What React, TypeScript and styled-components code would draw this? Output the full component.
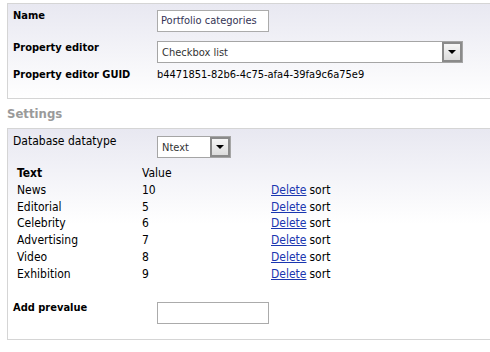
import React from 'react';
import styled, { createGlobalStyle } from 'styled-components';

const GlobalStyle = createGlobalStyle`
  html, body {
    margin: 0;
    padding: 0;
    background: #fff;
    overflow: hidden;
  }
  body {
    font-family: "DejaVu Sans Condensed", "DejaVu Sans", sans-serif;
    font-size: 11px;
    color: #000;
  }
`;

const Page = styled.div`
  width: 490px;
  height: 352px;
  padding: 3px 0 0 7px;
  box-sizing: border-box;
`;

const Panel = styled.div<{ $height: number }>`
  height: ${(p) => p.$height}px;
  box-sizing: border-box;
  border: 1px solid #d5d5d5;
  border-right: none;
  background: linear-gradient(#e8e8f1 0px, #ffffff 95px);
  padding: 4px 0 0 5px;
`;

const Heading = styled.h3`
  margin: 0;
  height: 26px;
  line-height: 24px;
  font-size: 13px;
  font-weight: bold;
  color: #9a9a9a;
`;

const FieldRow = styled.div<{ $h: number }>`
  display: grid;
  grid-template-columns: 144px 1fr;
  height: ${(p) => p.$h}px;
  align-items: start;
`;

const Label = styled.label<{ $bold?: boolean }>`
  font-weight: ${(p) => (p.$bold ? 'bold' : 'normal')};
  font-size: ${(p) => (p.$bold ? '11px' : '12px')};
  padding-top: 1px;
  line-height: 14px;
`;

const TextBox = styled.div<{ $w: number }>`
  width: ${(p) => p.$w}px;
  height: 22px;
  box-sizing: border-box;
  border: 1px solid #ababab;
  background: #fff;
  color: #333355;
  padding: 0 3px;
  line-height: 20px;
  margin-top: 2px;
`;

const Select = styled.div<{ $w: number; $top: number }>`
  width: ${(p) => p.$w}px;
  height: 22px;
  margin-top: ${(p) => p.$top}px;
  box-sizing: border-box;
  border: 1px solid #a5a5a5;
  background: #fff;
  display: flex;
  align-items: center;
  justify-content: space-between;
  padding-left: 4px;
  color: #333;
`;

const Arrow = styled.span`
  width: 20px;
  height: 20px;
  box-sizing: border-box;
  border: 2px solid #8a8a8a;
  background: linear-gradient(#f6f6f6, #dcdcdc);
  display: flex;
  align-items: center;
  justify-content: center;
  &::after {
    content: '';
    border-left: 4px solid transparent;
    border-right: 4px solid transparent;
    border-top: 4px solid #000;
  }
`;

const Guid = styled.span`
  line-height: 14px;
  padding-top: 1px;
`;

const Table = styled.div`
  display: grid;
  grid-template-columns: 125px 129px 1fr;
  padding-left: 4px;
  margin-top: 2px;
  font-size: 12px;
`;

const Cell = styled.div<{ $bold?: boolean }>`
  height: 16.8px;
  line-height: 16px;
  font-weight: ${(p) => (p.$bold ? 'bold' : 'normal')};
`;

const DeleteLink = styled.a`
  color: #1a36b0;
  text-decoration: underline;
  margin-right: 3px;
`;

const Spacer = styled.div<{ $h: number }>`
  height: ${(p) => p.$h}px;
`;

const rows: [string, number][] = [
  ['News', 10],
  ['Editorial', 5],
  ['Celebrity', 6],
  ['Advertising', 7],
  ['Video', 8],
  ['Exhibition', 9],
];

export default function App() {
  return (
    <Page>
      <GlobalStyle />
      <Panel $height={96}>
        <FieldRow $h={32}>
          <Label $bold>Name</Label>
          <TextBox $w={112}>Portfolio categories</TextBox>
        </FieldRow>
        <FieldRow $h={27}>
          <Label $bold>Property editor</Label>
          <Select $w={306} $top={1}>
            Checkbox list
            <Arrow />
          </Select>
        </FieldRow>
        <FieldRow $h={20}>
          <Label $bold>Property editor GUID</Label>
          <Guid>b4471851-82b6-4c75-afa4-39fa9c6a75e9</Guid>
        </FieldRow>
      </Panel>
      <Spacer $h={3} />
      <Heading>Settings</Heading>
      <Panel $height={212}>
        <FieldRow $h={30}>
          <Label>Database datatype</Label>
          <Select $w={74} $top={3}>
            Ntext
            <Arrow />
          </Select>
        </FieldRow>
        <Table>
          <Cell $bold>Text</Cell>
          <Cell>Value</Cell>
          <Cell />
          {rows.map(([text, value]) => (
            <React.Fragment key={text}>
              <Cell>{text}</Cell>
              <Cell>{value}</Cell>
              <Cell>
                <DeleteLink href="#">Delete</DeleteLink>sort
              </Cell>
            </React.Fragment>
          ))}
        </Table>
        <Spacer $h={17} />
        <FieldRow $h={30}>
          <Label $bold>Add prevalue</Label>
          <TextBox $w={112} />
        </FieldRow>
      </Panel>
    </Page>
  );
}
